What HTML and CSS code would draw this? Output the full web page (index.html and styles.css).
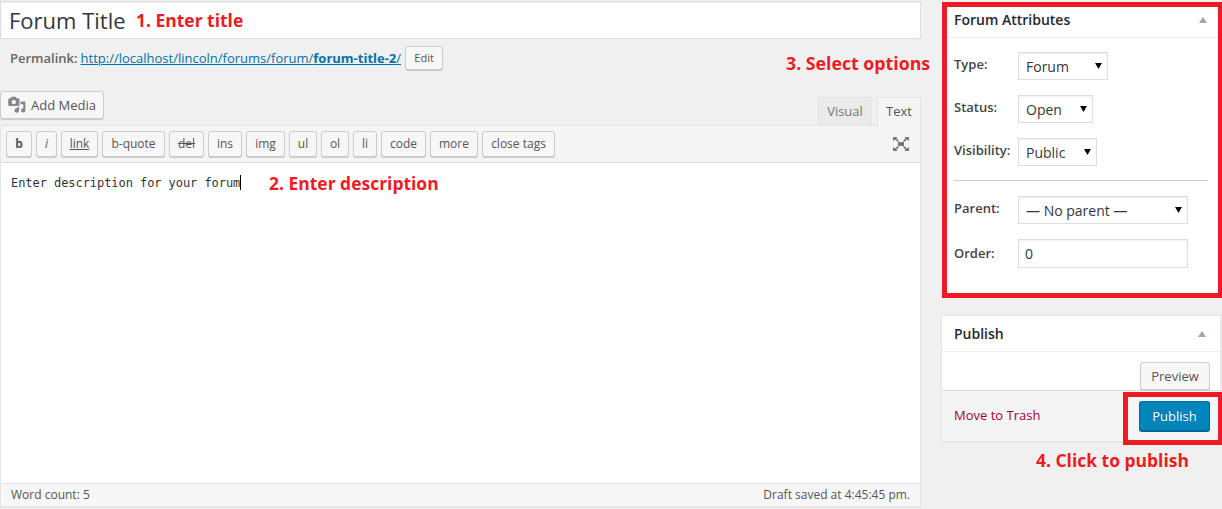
FILE: index.html
```html
<!DOCTYPE html>
<html lang="en">
<head>
<meta charset="utf-8">
<title>Edit Forum</title>
<link rel="stylesheet" href="styles.css">
</head>
<body>
<div class="page">
  <main class="main">
    <div class="title-field"><span>Forum Title</span></div>
    <div class="permalink">
      <strong>Permalink:</strong>
      <a class="permalink-url">http://localhost/lincoln/forums/forum/<b>forum-title-2</b>/</a>
      <button class="button edit">Edit</button>
    </div>
    <div class="editor-tools">
      <button class="button add-media">
        <svg class="media-icon" width="18" height="18" viewBox="0 0 18 18"><path fill="#82878c" fill-rule="evenodd" d="M1.700 2.200H2.600L3.600 .8H7.600L8.600 2.200H10Q11.500 2.200 11.500 3.700V8.600Q11.500 10.100 10 10.100H1.700Q.2 10.100 .2 8.600V3.700Q.2 2.200 1.700 2.200ZM5.800 3.900A2.200 2.200 0 1 0 5.800 8.300A2.200 2.200 0 1 0 5.800 3.900Z"/><path fill="#82878c" d="M12.700 5.500H17.400V14.300A2.200 2.200 0 1 1 15.300 12.200V8.200H12.700ZM9.200 11H11.100V14.500A2.300 2.300 0 1 1 9.200 12.300Z"/></svg>
        <span>Add Media</span>
      </button>
      <div class="tabs"><span class="tab">Visual</span><span class="tab active">Text</span></div>
    </div>
    <section class="editor">
      <div class="toolbar">
        <button class="button tag tag-b">b</button>
        <button class="button tag tag-i">i</button>
        <button class="button tag tag-link">link</button>
        <button class="button tag tag-quote">b-quote</button>
        <button class="button tag tag-del">del</button>
        <button class="button tag tag-ins">ins</button>
        <button class="button tag tag-img">img</button>
        <button class="button tag tag-list">ul</button>
        <button class="button tag tag-list">ol</button>
        <button class="button tag tag-li">li</button>
        <button class="button tag tag-code">code</button>
        <button class="button tag tag-more">more</button>
        <button class="button tag tag-close">close tags</button>
        <svg class="fullscreen" width="18" height="16" viewBox="0 0 18 16"><path d="M6 6h6v4H6z"/><path d="M1 1h4.500L4.400 2.200 7 5 6 6 3 3.500 1 5zM17 1h-4.500l1.100 1.200L11 5l1 1 3-2.500L17 5zM1 15h4.500l-1.100-1.200L7 11l-1-1-3 2.500L1 11zM17 15h-4.500l1.100-1.200L11 11l1-1 3 2.500 2-1.500z"/></svg>
      </div>
      <div class="textarea"><span class="typed">Enter description for your forum</span></div>
      <div class="status"><span>Word count: 5</span><span>Draft saved at 4:45:45 pm.</span></div>
    </section>
  </main>
  <aside class="side">
    <section class="attributes">
      <h2 class="box-title">Forum Attributes<i class="toggle"></i></h2>
      <div class="fields">
        <div class="field"><b>Type:</b><span class="select type">Forum<svg class="caret" viewBox="0 0 8 7"><path d="M0 0h8L4 7z"/></svg></span></div>
        <div class="field"><b>Status:</b><span class="select open">Open<svg class="caret" viewBox="0 0 8 7"><path d="M0 0h8L4 7z"/></svg></span></div>
        <div class="field"><b>Visibility:</b><span class="select public">Public<svg class="caret" viewBox="0 0 8 7"><path d="M0 0h8L4 7z"/></svg></span></div>
        <div class="divider"></div>
        <div class="field"><b>Parent:</b><span class="select parent">— No parent —<svg class="caret" viewBox="0 0 8 7"><path d="M0 0h8L4 7z"/></svg></span></div>
        <div class="field order"><b>Order:</b><span class="number">0</span></div>
      </div>
    </section>
    <section class="publish-box">
      <h2 class="box-title">Publish<i class="toggle"></i></h2>
      <div class="preview-row"><button class="button preview">Preview</button></div>
      <div class="publish-row"><a class="trash">Move to Trash</a><button class="button primary">Publish</button></div>
    </section>
  </aside>
</div>
<div class="highlight"></div>
<div class="note note-1">1. Enter title</div>
<div class="note note-2">2. Enter description</div>
<div class="note note-3">3. Select options</div>
<div class="note note-4">4. Click to publish</div>
</body>
</html>
```
FILE: styles.css
```css
* { box-sizing: border-box; }
body { margin: 0; width: 1222px; height: 509px; overflow: hidden; position: relative; background: #f0f0f0; color: #444; font: 13px/19px "Open Sans", sans-serif; }
.page { display: flex; gap: 20px; padding-top: 1px; }
.main { width: 921px; }
.title-field { height: 38px; border: 1px solid #ddd; background: #fff; box-shadow: inset 0 1px 2px rgba(0,0,0,.07); padding-left: 8px; font-size: 22px; line-height: 37px; color: #32373c; }
.permalink { display: flex; align-items: center; height: 26px; margin-top: 6px; padding-left: 10px; white-space: nowrap; }
.permalink strong { font-weight: 600; color: #666; margin-right: 3px; }
.permalink-url { color: #0073aa; text-decoration: underline; margin-right: 4px; }
.button { display: inline-flex; align-items: center; justify-content: center; padding: 0; margin: 0; border: 1px solid #ccc; border-radius: 3px; background: #f7f7f7; box-shadow: 0 1px 0 #ccc; color: #555; font: 13px/18px "Open Sans", sans-serif; white-space: nowrap; }
.edit { width: 38px; height: 24px; font-size: 11px; }
.editor-tools { display: flex; justify-content: space-between; height: 34px; margin-top: 20px; }
.add-media { width: 104px; height: 28px; gap: 5px; }
.media-icon { display: block; }
.tabs { display: flex; gap: 5px; padding-top: 6px; align-items: flex-start; }
.tab { height: 28px; width: 54px; border: 1px solid #e5e5e5; border-bottom: 0; background: #ebebeb; color: #777; line-height: 27px; text-align: center; }
.tab.active { width: 44px; height: 29px; background: #f5f5f5; color: #555; position: relative; z-index: 1; }
.editor { height: 382px; display: flex; flex-direction: column; border: 1px solid #e5e5e5; background: #fff; box-shadow: 0 1px 1px rgba(0,0,0,.04); }
.toolbar { display: flex; align-items: flex-start; gap: 4px; height: 37px; padding: 5px; border-bottom: 1px solid #ddd; background: #f5f5f5; }
.tag { height: 26px; font-size: 12px; padding-bottom: 1px; }
.tag-b { width: 26px; font-weight: 700; }
.tag-i { width: 21px; font-style: italic; }
.tag-link { width: 37px; text-decoration: underline; }
.tag-quote { width: 63px; }
.tag-del { width: 35px; text-decoration: line-through; }
.tag-ins { width: 34px; }
.tag-img { width: 39px; }
.tag-list { width: 28px; }
.tag-li { width: 24px; }
.tag-code { width: 45px; }
.tag-more { width: 48px; }
.tag-close { width: 73px; }
.fullscreen { margin: 5px 5px 0 auto; fill: #777; }
.textarea { flex: 1; padding: 11px 10px; color: #333; font: 12px/18px "DejaVu Sans Mono", monospace; }
.typed { display: inline-block; height: 15px; line-height: 17px; border-right: 1px solid #000; letter-spacing: -.06px; }
.status { display: flex; justify-content: space-between; height: 23px; padding: 0 10px; border-top: 1px solid #e5e5e5; background: #f7f7f7; font-size: 12px; line-height: 22px; color: #555; }
.side { width: 281px; padding-top: 1px; }
.attributes { width: 281px; height: 296px; margin-left: 1px; border: 5px solid #ed1c24; background: #fff; }
.box-title { display: flex; justify-content: space-between; align-items: center; margin: 0; padding: 0 11px 4px 7px; height: 31px; border-bottom: 1px solid #eee; font-size: 14px; font-weight: 600; color: #23282d; line-height: 20px; }
.toggle { width: 0; border: 4.5px solid transparent; border-top: 0; border-bottom: 6px solid #a0a5aa; }
.fields { padding: 14px 10px 0 7px; }
.field { display: flex; height: 28px; margin-bottom: 15px; }
.field b { width: 64px; font-weight: 600; line-height: 24px; }
.select { display: flex; align-items: center; justify-content: space-between; height: 28px; padding: 1px 5px 0 7px; border: 1px solid #ddd; background: #fff; box-shadow: inset 0 1px 2px rgba(0,0,0,.07); font-size: 14px; color: #32373c; }
.caret { width: 7px; height: 6px; margin-top: -2px; fill: #000; }
.type { width: 90px; }
.open { width: 75px; }
.public { width: 79px; }
.parent, .number { width: 170px; }
.divider { height: 1px; margin: -1px 0 15px; background: #ccc; }
.order b { line-height: 29px; }
.number { height: 29px; border: 1px solid #ddd; box-shadow: inset 0 1px 2px rgba(0,0,0,.07); padding-left: 6px; font-size: 14px; line-height: 28px; color: #32373c; }
.publish-box { width: 280px; height: 127px; margin-top: 17px; border: 1px solid #e5e5e5; background: #fff; box-shadow: 0 1px 1px rgba(0,0,0,.04); }
.publish-box .box-title { height: 36px; padding: 0 14px 0 12px; }
.preview-row { display: flex; justify-content: flex-end; height: 38px; padding: 10px 10px 0; }
.preview { width: 70px; height: 28px; flex: none; }
.publish-row { display: flex; justify-content: space-between; height: 51px; padding: 10px 10px 0 12px; border-top: 1px solid #ddd; background: #f5f5f5; }
.trash { color: #a00038; line-height: 28px; }
.primary { width: 71px; height: 30px; background: #0085ba; border-color: #0073aa #006799 #006799; box-shadow: 0 1px 0 #006799; color: #fff; text-shadow: 0 -1px 1px #006799; }
.highlight { position: absolute; left: 1123px; top: 392px; width: 100px; height: 53px; border: 5px solid #ed1c24; }
.note { position: absolute; color: #ed1c24; font: 700 18px/24px "Open Sans", sans-serif; white-space: nowrap; transform-origin: 0 50%; transform: scaleX(.97); }
.note-1 { left: 136px; top: 8px; }
.note-2 { left: 269px; top: 171px; }
.note-3 { left: 786px; top: 51px; transform: scaleX(.985); }
.note-4 { left: 1036px; top: 448px; }
```
